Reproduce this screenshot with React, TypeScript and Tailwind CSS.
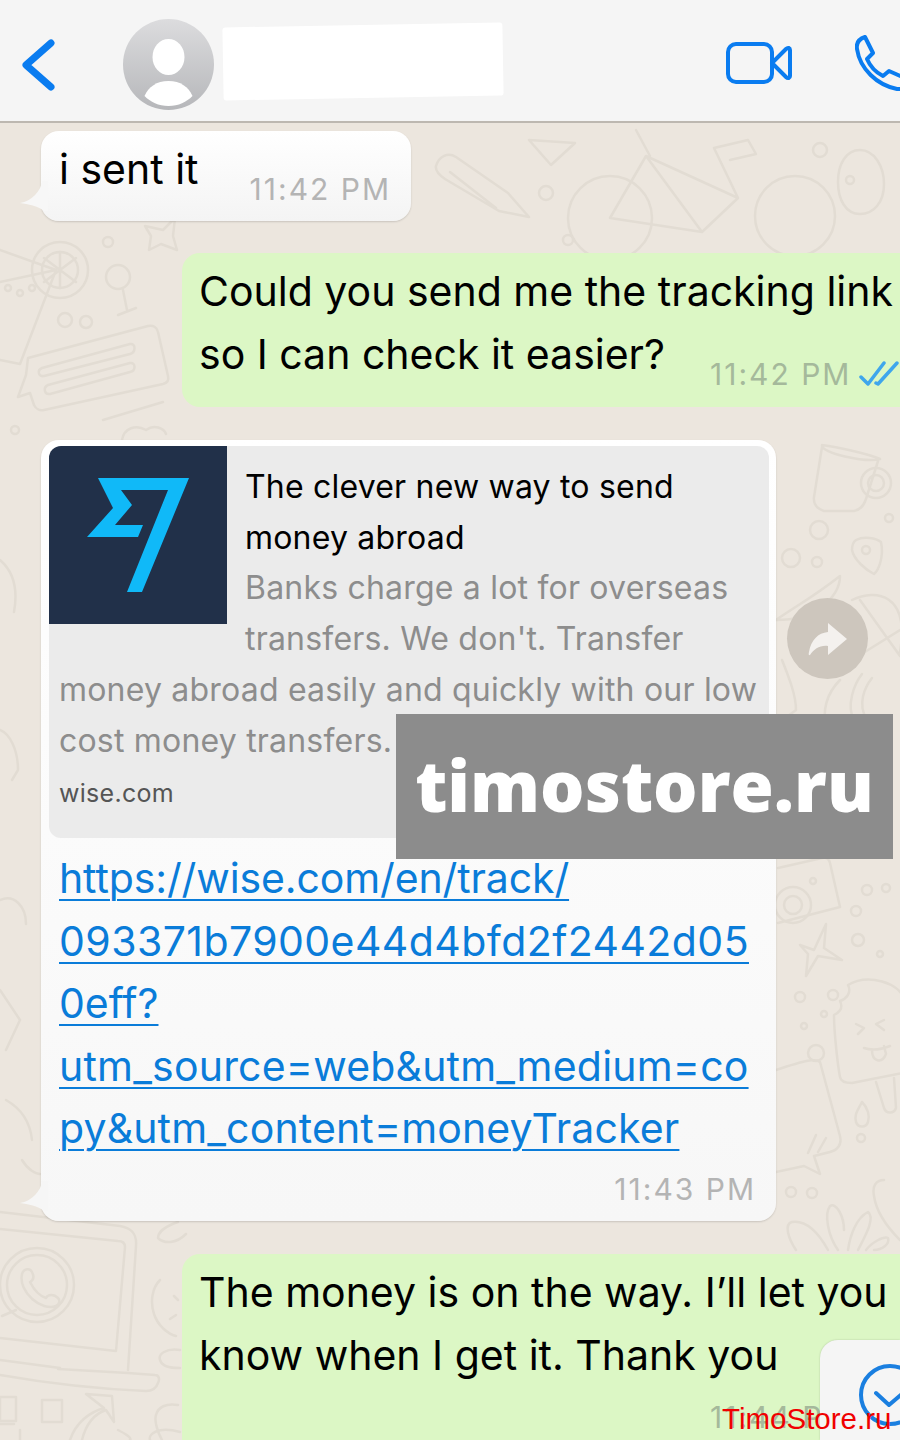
const sans = { fontFamily: 'Inter, "Liberation Sans", sans-serif' }

function WallpaperDoodles() {
  return (
    <svg className="absolute inset-0 h-full w-full" viewBox="0 0 900 1440" fill="none" stroke="#e2dcd3" strokeWidth="2.5" strokeLinecap="round" strokeLinejoin="round">
      {/* pencil and bicycle top right */}
      <path d="M436 166c3-10 12-14 20-9l52 36 21 24-30-6-54-32c-6-4-10-8-9-13zM450 172l46 36" />
      <path d="M529 140l46 3-24 22z" />
      <circle cx="546" cy="193" r="7" />
      <circle cx="610" cy="218" r="42" />
      <circle cx="795" cy="216" r="40" />
      <path d="M610 218l36-62 92 42-36 34zM646 156l56 76M636 130l14 26M738 198l-24-50 34-8 8 14-26 6" />
      <circle cx="568" cy="240" r="5" />
      <circle cx="820" cy="150" r="7" />
      <circle cx="850" cy="180" r="4" />
      <path d="M860 150c14 0 24 16 24 34s-10 30-24 30-22-14-22-32 8-32 22-32z" />
      {/* drink and lemon on the left */}
      <circle cx="60" cy="270" r="28" />
      <circle cx="60" cy="270" r="18" />
      <path d="M0 250l56 20-56 12M56 270l-36 94-20-4M60 252v36M44 258l32 24M44 282l32-24" />
      <circle cx="8" cy="288" r="3" />
      <circle cx="20" cy="293" r="3" />
      <circle cx="32" cy="288" r="3" />
      <circle cx="118" cy="277" r="12" />
      <path d="M123 290l4 20M118 315l18-7" />
      <circle cx="65" cy="320" r="7" />
      <circle cx="86" cy="322" r="6" />
      <circle cx="108" cy="242" r="5" />
      <path d="M145 226l18 4 12-12-2 18 4 14-16-6-12 6 2-14z" />
      {/* chat card */}
      <path d="M28 358l120-32c5-1 9 1 10 6l10 44c1 4-1 7-5 8L44 410c-4 1-8-1-10-5l-4-12-12 4 8-22z" />
      <path d="M42 368l88-24c6-1 6 8 0 10l-86 22c-6 1-7-6-2-8zM48 385l82-22c6-1 6 8 0 9l-80 22c-6 1-7-7-2-9z" />
      <path d="M103 420l60-18M122 440c2-12 14-16 24-10 8-6 18-2 20 4" />
      <circle cx="15" cy="430" r="4" />
      {/* mug, pin, globe */}
      <path d="M822 445c14 2 44 8 58 14M822 445c-2 8 44 18 58 14M822 447l-8 50c-1 8 4 12 10 14l30 0c6-1 10-6 12-12l12-38" />
      <circle cx="876" cy="483" r="15" />
      <circle cx="876" cy="483" r="8" />
      <circle cx="819" cy="530" r="9" />
      <circle cx="791" cy="558" r="9" />
      <circle cx="817" cy="562" r="5" />
      <circle cx="889" cy="518" r="4" />
      <path d="M856 540c8-4 20-2 25 2 3 14-2 28-7 32-8-4-20-14-22-24 0-4 1-8 4-10z" />
      <circle cx="866" cy="550" r="4" />
      <path d="M776 620c20-14 36-22 64-44 0 12-6 22-20 32-10 8-26 12-44 12" />
      <path d="M852 600c24-12 58-6 48 52M860 600l40 56M852 660l48-30" />
      <path d="M840 680c-14 14-18 30-14 50M862 674c-8 10-16 32-8 46l12-2c-8-14-2-30 6-40M782 660c8 20 14 36 14 50l-8 6" />
      {/* camera and star */}
      <path d="M778 868l44-10c4-1 7 1 8 5l10 44-62 16" />
      <circle cx="793" cy="905" r="18" />
      <circle cx="793" cy="905" r="9" />
      <circle cx="813" cy="881" r="3" />
      <path d="M800 945l14 5 12-26-2 24 18 12-24-4-12 20 2-22z" />
      <circle cx="867" cy="890" r="5" />
      <circle cx="856" cy="911" r="5" />
      <circle cx="858" cy="940" r="6" />
      <circle cx="880" cy="954" r="3" />
      <circle cx="886" cy="888" r="4" />
      <circle cx="800" cy="997" r="5" />
      <circle cx="833" cy="995" r="5" />
      <circle cx="824" cy="1014" r="3" />
      <circle cx="804" cy="1026" r="3" />
      <circle cx="816" cy="1053" r="8" />
      {/* ice lolly */}
      <path d="M848 985c20-12 52-2 56 14M848 985c4 8-2 14-8 16 4 8-2 12-6 14 0 18 4 52 6 62 1 6 8 6 12 6l50-10M876 1082l8 26c2 6 10 6 12 0l-2-30" />
      <path d="M856 1024l8 4-6 6M884 1020l-8 4 8 6M864 1048c6 2 16 2 26-2M872 1050c0 12 10 14 14 4l-2-8" />
      <path d="M862 1102c-4 8-8 12-6 20 2 6 10 6 12 0 2-6 0-14-6-20z" />
      <circle cx="861" cy="1138" r="4" />
      <path d="M776 1070c30-10 40-12 44-8l20 74c2 8-2 14-10 16l-16 4 6 18-16-8-28 6" />
      <path d="M816 1135l-8 18M826 1138l-8 14" />
      <circle cx="791" cy="1192" r="5" />
      <circle cx="812" cy="1193" r="5" />
      <path d="M796 1250c-8-12-12-26-4-28 14-2 26 10 36 28M838 1250c-10-14-14-36-8-44 6-4 14 10 14 24M848 1250c2-14 8-32 20-38 8 6-4 26-10 38M866 1250c6-8 18-14 22-12 2 6-6 12-14 12" />
      <path d="M884 1180c-8 0-12 6-10 16 2 14 12 30 26 44" />
      {/* left strip */}
      <path d="M0 560c14 12 18 30 14 52M0 730c10 4 18 20 18 40l-6 10M0 900c14-6 26 6 26 24M0 990l20 30-14 30M6 1100c14 8 24 20 26 40M22 1160c6 10 14 14 18 14" />
      {/* laptop with whatsapp logo */}
      <path d="M0 1212l120 14c12 2 17 8 16 20l-8 124" />
      <path d="M0 1229l118 12c4 0 7 2 7 6l-9 104-116-13" />
      <circle cx="37" cy="1285" r="37" />
      <circle cx="37" cy="1285" r="30" />
      <path d="M22 1274c2-6 8-6 10-2 2 4 2 8-2 10 4 8 10 14 16 16 2-4 8-4 12 0 2 2 2 6-2 8-14 6-38-14-34-32zM2 1316l14-6" />
      <path d="M0 1360l60 8-2 1 70 4 27 2c4 0 5 4 3 8-2 6-6 8-12 8-50-2-100-8-146-16" />
      <path d="M0 1397h16v24H0zM42 1400h20v22H42zM0 1424h14M20 1430v10" />
      <path d="M70 1440c6-18 20-28 34-32l-18-14 26 2 2 26-8-12c-12 4-20 14-24 30M118 1430c8 4 14 8 12 10M150 1440c-2-6 8-14 30-8" />
      <path d="M160 1280c-8 8-10 22-6 34 4 12 14 20 22 22M174 1296l4 4M176 1315l-6 4M180 1350c-14-2-22 4-20 10 2 6 8 8 20 8M178 1405c-12-2-20 2-22 10-2 6 2 18 6 25" />
      <path d="M178 1222c-12 4-20 10-20 16 6 6 18 6 28-4" />
    </svg>
  )
}

function TimeStamp({ children, className }: { children: React.ReactNode; className: string }) {
  return <span className={`text-[30px] leading-none tracking-[2px] ${className}`}>{children}</span>
}

function DoubleTicks() {
  return (
    <svg width="40" height="28" viewBox="0 0 40 28" fill="none" stroke="#3fa6ec" strokeWidth="3.5" strokeLinecap="round" strokeLinejoin="round">
      <path d="M2 17l7 7L25 3" />
      <path d="M17 23l2 1L38 3" />
    </svg>
  )
}

function BubbleTail({ color }: { color: string }) {
  return (
    <svg className="absolute bottom-[10px] left-[-21px]" width="28" height="30" viewBox="0 0 28 30">
      <path d="M22 0C21 10 12 20 0 22c8 1 18 3 24 8h4V0z" fill={color} />
    </svg>
  )
}

export default function App() {
  return (
    <div className="relative h-[1440px] w-[900px] overflow-hidden bg-[#ece6de] text-black" style={sans}>
      <WallpaperDoodles />

      <header className="relative flex h-[123px] items-center border-b-2 border-[#bdb8b1] bg-[#f5f5f5] pl-[22px] pt-[8px]">
        <svg className="shrink-0" width="34" height="56" viewBox="0 0 34 56" fill="none" stroke="#0a7cf0" strokeWidth="7" strokeLinecap="round" strokeLinejoin="round">
          <path d="M29 6L4 28l25 22" />
        </svg>
        <svg className="ml-[67px] shrink-0" width="91" height="91" viewBox="0 0 91 91">
          <defs>
            <linearGradient id="avatarFill" x1="0" y1="0" x2="0" y2="1">
              <stop offset="0" stopColor="#dcdcde" />
              <stop offset="1" stopColor="#b6b7ba" />
            </linearGradient>
          </defs>
          <circle cx="45.5" cy="45.5" r="45.5" fill="url(#avatarFill)" />
          <ellipse cx="45.5" cy="38" rx="16" ry="18" fill="#fff" />
          <path d="M45.5 62c-12 0-20 6-24 15 6 6 14 10 24 10s18-4 24-10c-4-9-12-15-24-15z" fill="#fff" />
        </svg>
        <div className="ml-[9px] mt-[-6px] h-[73px] w-[280px] shrink-0 -rotate-1 rounded-[3px] bg-white" />
        <svg className="ml-[223px] mt-[-4px] shrink-0" width="66" height="42" viewBox="0 0 66 42" fill="none" stroke="#0a7cf0" strokeWidth="4" strokeLinejoin="round">
          <rect x="2" y="2" width="44" height="38" rx="8" />
          <path d="M46 21l14-14c2-2 4-1 4 1v26c0 2-2 3-4 1z" />
        </svg>
        <svg className="ml-[63px] mt-[-4px] shrink-0" width="60" height="56" viewBox="0 0 60 56" fill="none" stroke="#0a7cf0" strokeWidth="4" strokeLinecap="round" strokeLinejoin="round">
          <path d="M10 2c-6 2-9 6-8 12 3 20 20 36 40 40h18M10 2l8 16-6 6c3 7 8 13 16 17l6-5 18 8" />
        </svg>
      </header>

      <main className="relative flex flex-col pt-[8px]">
        <div className="relative ml-[41px] flex h-[90px] w-[370px] rounded-[18px] bg-gradient-to-b from-white to-[#f4f4f4] pl-[18px] pr-[20px] shadow-[0_1px_2px_rgba(0,0,0,0.15)]">
          <BubbleTail color="#f7f7f7" />
          <p className="mt-[16px] text-[41px] leading-[44px]">i sent it</p>
          <TimeStamp className="ml-auto mt-[43px] text-[#b4b4b4]">11:42 PM</TimeStamp>
        </div>

        <div className="relative ml-[182px] mt-[32px] h-[154px] w-[760px] rounded-l-[18px] bg-[#dcf7c5] pl-[17px] pt-[7px]">
          <p className="text-[41px] leading-[62.5px]">
            Could you send me the tracking link
            <br />
            so I can check it easier?
          </p>
          <div className="absolute left-[528px] top-[106px] flex items-center gap-[8px]">
            <TimeStamp className="text-[#a5b99b]">11:42 PM</TimeStamp>
            <DoubleTicks />
          </div>
        </div>

        <div className="mt-[33px] flex items-start">
          <div className="relative ml-[41px] h-[781px] w-[735px] shrink-0 rounded-[18px] bg-gradient-to-b from-white to-[#f7f7f7] pb-[6px] pl-[8px] pr-[7px] pt-[6px] shadow-[0_1px_2px_rgba(0,0,0,0.15)]">
            <BubbleTail color="#f6f6f6" />
            <div className="h-[392px] whitespace-nowrap rounded-[12px] bg-[#ebebeb] px-[10px] text-[32px] leading-[51px] tracking-[0.2px]">
              <div className="float-left -ml-[10px] mr-[18px] h-[178px] w-[178px] overflow-hidden rounded-tl-[12px] bg-[#213049]">
                <svg width="178" height="178" viewBox="0 0 178 178" fill="#10b9f8">
                  <path d="M49 32h91L93 146H78l41-102H72l11 15-17 20h28l-5 12H38l26-29z" />
                </svg>
              </div>
              <p className="pt-[15px]">
                The clever new way to send
                <br />
                money abroad
              </p>
              <p className="-mt-[1px] text-[#8d8d8d]">
                Banks charge a lot for overseas
                <br />
                transfers. We don't. Transfer
                <br />
                money abroad easily and quickly with our low
                <br />
                cost money transfers.
              </p>
              <p className="pt-[2px] text-[25px] tracking-[0.3px] text-[#555555]">wise.com</p>
            </div>
            <p className="clear-both mt-[9px] pl-[10px] text-[41px] leading-[62.5px] text-[#0a7cd9] underline decoration-2 underline-offset-[6px]">
              <span className="tracking-[-0.12px]">https://wise.com/en/track/</span>
              <br />
              <span className="tracking-[0.43px]">093371b7900e44d4bfd2f2442d05</span>
              <br />
              0eff?
              <br />
              <span className="tracking-[0.2px]">utm_source=web&amp;utm_medium=co</span>
              <br />
              <span className="tracking-[0.15px]">py&amp;utm_content=moneyTracker</span>
            </p>
            <div className="mt-[14px] pr-[13px] text-right">
              <TimeStamp className="text-[#b4b4b4]">11:43 PM</TimeStamp>
            </div>
          </div>
          <div className="ml-[11px] mt-[158px] flex h-[81px] w-[81px] shrink-0 items-center justify-center rounded-full bg-[#cdc6bd]">
            <svg width="40" height="34" viewBox="0 0 40 34" fill="#f4f1ee">
              <path d="M20 1l19 16-19 16v-9C12 23 6 27 2 33c-2 1-1-3-1-3C3 18 10 11 20 10z" />
            </svg>
          </div>
        </div>

        <div className="relative ml-[182px] mt-[33px] h-[220px] w-[760px] rounded-l-[18px] bg-[#dcf7c5] pl-[17px] pt-[7px]">
          <p className="text-[41px] leading-[62.5px]">
            The money is on the way. I’ll let you
            <br />
            know when I get it. Thank you
          </p>
          <div className="pl-[511px] pt-[16px]">
            <TimeStamp className="text-[#a5b99b]">11:44 PM</TimeStamp>
          </div>
        </div>
      </main>

      {/* overlays */}
      <div className="absolute left-[396px] top-[714px] flex h-[145px] w-[497px] items-center justify-center bg-[#8c8c8c] pb-[3px] text-[70px] font-extrabold text-white" style={{ fontFamily: '"Open Sans", sans-serif' }}>
        timostore.ru
      </div>
      <div className="absolute left-[820px] top-[1340px] flex h-[100px] w-[80px] items-start rounded-tl-[18px] bg-[#f5f5f5] pl-[38px] pt-[23px] shadow-[0_0_2px_rgba(0,0,0,0.2)]">
        <svg className="shrink-0" width="64" height="64" viewBox="0 0 64 64" fill="none" stroke="#1a7fe0" strokeWidth="4" strokeLinecap="round" strokeLinejoin="round">
          <circle cx="32" cy="32" r="29" />
          <path d="M18 30l13 12 14-12" />
        </svg>
      </div>
      <div className="absolute left-[722px] top-[1402px] text-[29.5px] leading-[34px] text-[#f00000]" style={{ fontFamily: '"Liberation Sans", sans-serif' }}>
        TimoStore.ru
      </div>
    </div>
  )
}
